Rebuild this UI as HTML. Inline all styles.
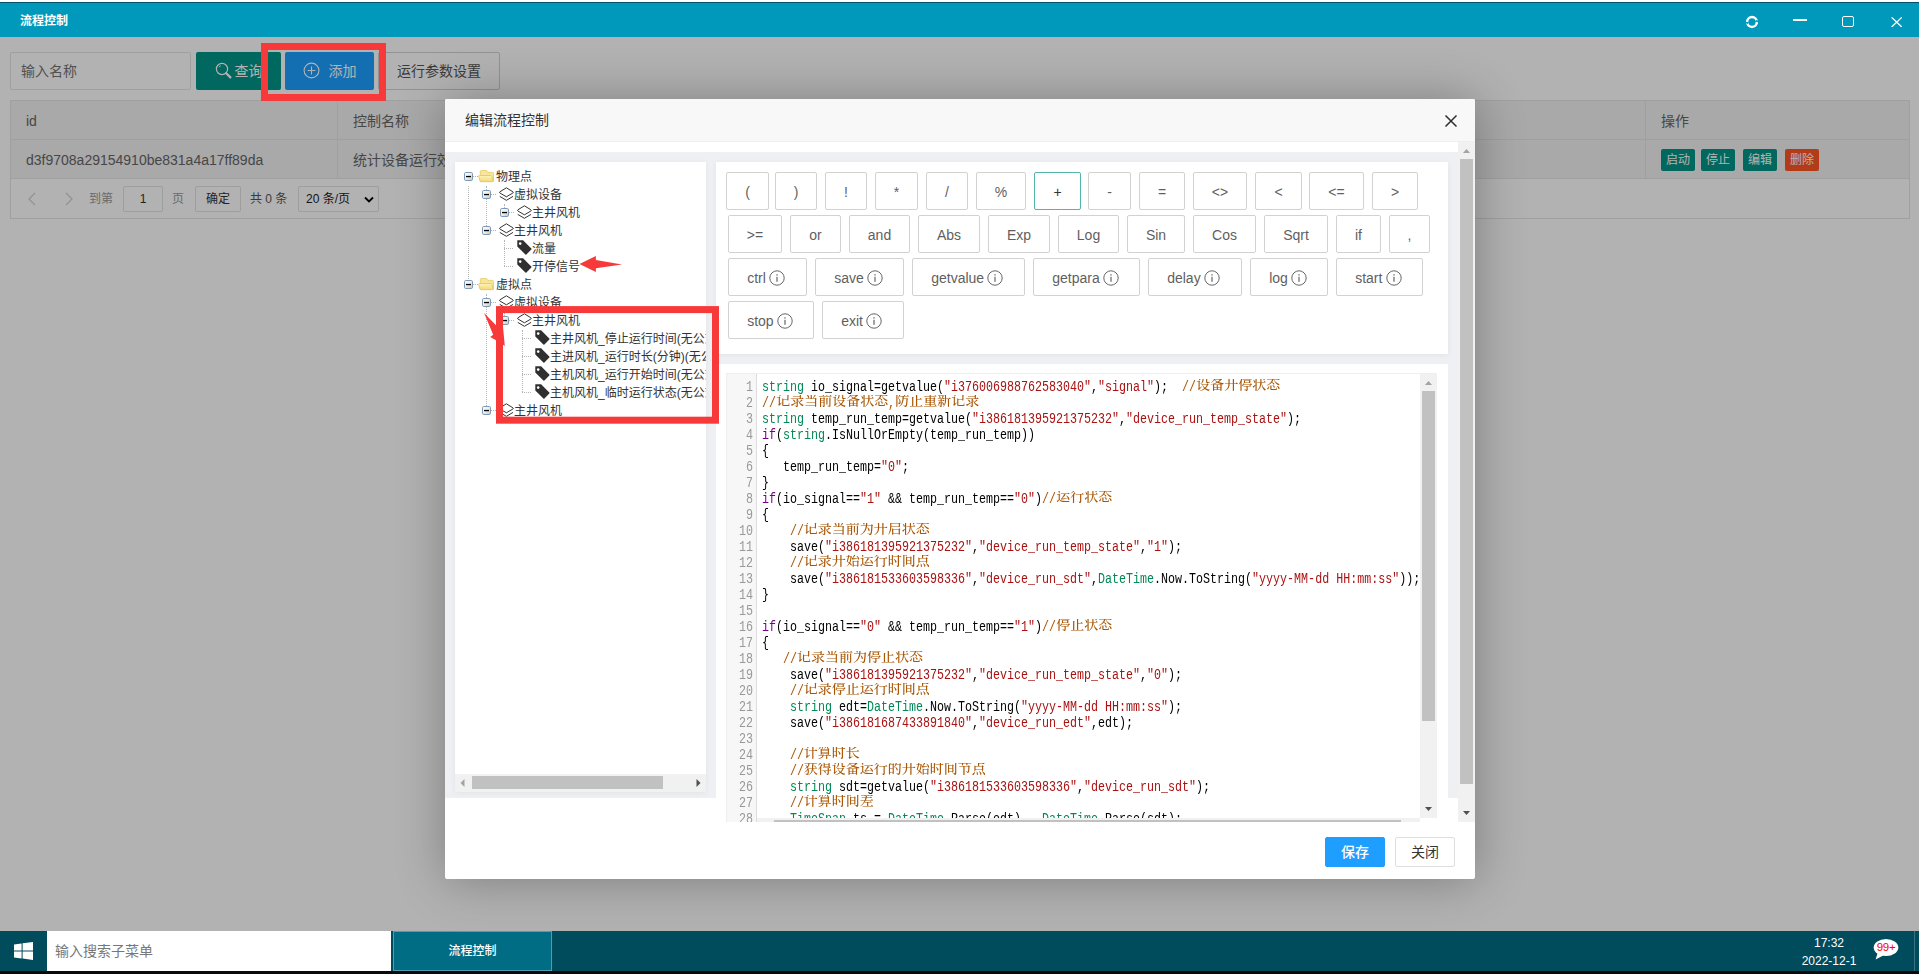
<!DOCTYPE html>
<html lang="zh-CN"><head><meta charset="utf-8"><title>流程控制</title>
<style>
*{box-sizing:border-box;margin:0;padding:0}
html,body{width:1919px;height:974px;overflow:hidden;background:#fff}
body{position:relative;font:14px/1.2 "Liberation Sans","Noto Sans CJK SC",sans-serif;color:#333}
i{font-style:normal}
#topline{position:absolute;left:0;top:0;width:1919px;height:3px;background:#fff;border-bottom:1px solid #00506a}
#titlebar{position:absolute;left:0;top:3px;width:1919px;height:34px;background:#0099bb}
#titlebar .tt{position:absolute;left:20px;top:9.6px;font-size:12px;line-height:16px;font-weight:bold;color:#fff;letter-spacing:0}
.wb{position:absolute}
.wmin{position:absolute;left:1793px;top:15.8px;width:14.2px;height:2.4px;background:#fff}
.wmax{position:absolute;left:1842.3px;top:12.8px;width:11.6px;height:11.4px;border:1.3px solid #fff;border-radius:2px}
#bgpage{position:absolute;left:0;top:37px;width:1919px;height:894px;background:#fff;overflow:hidden}
.inp{position:absolute;left:10px;top:15px;width:181px;height:38px;border:1px solid #e6e6e6;border-radius:2px;line-height:36px;padding-left:10px;color:#757575}
.btn{position:absolute;top:15px;height:38px;line-height:38px;border-radius:2px;color:#fff;white-space:nowrap;text-align:center}
.bq{left:196px;width:85px;background:#009688}
.ba{left:285px;width:89px;background:#1e9fff}
.bp{left:378px;width:122px;background:#fff;border:1px solid #d2d2d2;color:#555;line-height:36px}
#tbl{position:absolute;left:10px;top:63px;width:1900px;height:119px;border:1px solid #e6e6e6}
.th,.td{position:absolute;height:39px;line-height:38px;padding-top:1px;padding-left:15px;background:#f2f2f2;border-right:1px solid #e6e6e6;border-bottom:1px solid #e6e6e6;color:#666;white-space:nowrap;overflow:hidden}
.th{top:0}
.td{top:39px}
.xs{position:absolute;top:9px;width:34px;height:22px;line-height:23.5px;font-size:12px;color:#fff;text-align:center;border-radius:2px}
.xs.g{background:#009688}.xs.r{background:#ff5722}
.pager{position:absolute;left:0;top:78px;width:1898px;height:39px;background:#fff}
.pt{position:absolute;top:12px;font-size:12px;line-height:16px;white-space:nowrap}
.pbox{position:absolute;top:7px;height:26px;line-height:24px;border:1px solid #e2e2e2;border-radius:2px;font-size:12px;text-align:center;color:#333;white-space:nowrap}
#shade{position:absolute;left:0;top:37px;width:1919px;height:894px;background:rgba(0,0,0,.3)}
#red1{position:absolute;left:261px;top:43px;width:125px;height:58px;border:7px solid #f8393a}
#dlg{position:absolute;left:445px;top:99px;width:1030px;height:780px;background:#fff;border-radius:2px;box-shadow:1px 1px 50px rgba(0,0,0,.3)}
.dt{position:absolute;left:0;top:0;width:1030px;height:43px;line-height:42px;padding-left:20px;background:#f8f8f8;border-bottom:1px solid #eee;border-radius:2px 2px 0 0;color:#333;font-size:14px}
.dx{position:absolute;left:999px;top:15px}
#gray{position:absolute;left:0;top:53px;width:1013px;height:646px;background:#eff0f4}
#tree{position:absolute;left:10px;top:63px;width:251px;height:630px;background:#fff;overflow:hidden;box-shadow:0 1px 6px rgba(0,0,0,.06);font-size:12px}
#tree .tx{position:absolute;line-height:18px;height:18px;white-space:nowrap;color:#333;font-size:12px}
.exp,.ic{position:absolute}
.vd{position:absolute;width:0;border-left:1px dotted #b5b5b5}
.hd{position:absolute;height:0;border-top:1px dotted #b5b5b5}
.hsb{position:absolute;left:0;top:612px;width:251px;height:18px;background:#f1f1f1}
.hth{position:absolute;left:17px;top:2px;width:191px;height:13px;background:#c1c1c1}
#bpanel{position:absolute;left:271px;top:63px;width:732px;height:192px;background:#fff;box-shadow:0 1px 6px rgba(0,0,0,.06)}
.kb{position:absolute;height:38px;line-height:39px;border:1px solid #d2d2d2;border-radius:2px;text-align:center;color:#5f5f5f;font-size:14px;white-space:nowrap;background:#fff}
.kb.hov{border-color:#54b5ab;color:#333}
.kb.wi{text-align:left;padding-left:18.2px}
.info{vertical-align:-3px;margin-left:-.8px}
#cpanel{position:absolute;left:271px;top:265px;width:732px;height:458px;background:#fff;overflow:hidden}
#cm{will-change:transform;position:absolute;left:10px;top:9px;width:711px;height:449px;border-top:1px solid #eee;border-left:1px solid #eee;overflow:hidden}
.gut{position:absolute;left:0;top:0;width:30px;height:449px;background:#f7f7f7;border-right:1px solid #ddd}
.ln{position:absolute;left:0;height:16px;width:693px;white-space:nowrap;overflow:hidden}
.ln .no,.ln pre{font-family:"Liberation Mono","Noto Serif CJK SC",monospace;font-size:14px;line-height:16px;height:16px}
.ln .no{position:absolute;left:-34.5px;top:0;width:60px;text-align:right;color:#999;transform:scaleX(.83333);transform-origin:100% 0}
.ln pre{position:absolute;left:34.6px;top:0;color:#000;transform:scaleX(.83333);transform-origin:0 0}
.ln .z{display:inline-block;height:16px;line-height:16px;vertical-align:top;font-family:"Liberation Mono","Noto Serif CJK SC",serif;font-size:14px;font-weight:500;transform:scaleX(1.2);transform-origin:0 0;white-space:nowrap;position:relative;top:-2px}
.k{color:#708}.t{color:#085}.s{color:#a11}.c{color:#a50}
.vsb{position:absolute;left:693px;top:0;width:17px;height:444px;background:#f1f1f1}
.vth{position:absolute;left:2px;top:17px;width:13px;height:330px;background:#c1c1c1}
.chsb{position:absolute;left:30px;top:444px;width:663px;height:5px;background:#f1f1f1}
.chth{position:absolute;left:17px;top:2px;width:627px;height:5px;background:#c1c1c1}
#osb{position:absolute;left:1013px;top:43px;width:17px;height:680px;background:#f1f1f1}
.oth{position:absolute;left:2px;top:17px;width:13px;height:625px;background:#c1c1c1}
.fb{position:absolute;top:738px;width:60px;height:30px;line-height:28px;text-align:center;border-radius:2px;font-size:14px}
.fb.save{left:880px;background:#1e9fff;border:1px solid #1e9fff;color:#fff;font-weight:500}
.fb.close{left:950px;background:#fff;border:1px solid #dedede;color:#333}
#anno{position:absolute;left:0;top:0;pointer-events:none}
#taskbar{position:absolute;left:0;top:931px;width:1919px;height:40px;background:#004b5c}
.start{position:absolute;left:0;top:0;width:47px;height:40px}
.srch{position:absolute;left:47px;top:0;width:344px;height:40px;background:#fff;color:#777;line-height:40px;padding-left:8px;font-size:14px}
.tab{position:absolute;left:393px;top:0;width:159px;height:40px;background:#006d85;border:1px solid #4f9db0;color:#fff;font-size:12px;font-weight:500;line-height:38px;text-align:center}
.clock{position:absolute;left:1779px;top:3px;width:100px;text-align:center;color:#fff;font-size:12px;line-height:18px}
.sd{position:absolute;left:1914px;top:0;width:1px;height:40px;background:#3a7483}
#blk{position:absolute;left:0;top:971px;width:1919px;height:3px;background:#0a0a0a}
</style></head>
<body>
<svg width="0" height="0" style="position:absolute"><defs><linearGradient id="eg" x1="0" y1="0" x2="1" y2="1"><stop offset="0" stop-color="#fff"/><stop offset=".45" stop-color="#f3efe8"/><stop offset="1" stop-color="#cfc5b2"/></linearGradient><linearGradient id="fg" x1="0" y1="0" x2="0" y2="1"><stop offset="0" stop-color="#fdf4b8"/><stop offset="1" stop-color="#f2d877"/></linearGradient></defs></svg>
<div id="topline"></div>
<div id="titlebar"><span class="tt">流程控制</span>
<svg class="wb" style="left:1745.2px;top:11.7px" width="14" height="14" viewBox="0 0 14 14"><circle cx="7" cy="7" r="4.9" fill="none" stroke="#fff" stroke-width="2.5"/><path d="M.2 6.4 L4.4 7.4 L2 9.2Z M13.8 7.6 L9.6 6.6 L12 4.8Z" fill="#0099bb"/><path d="M.6 5 L3.6 7.6 L-.2 8.2Z M13.4 9 L10.4 6.4 L14.2 5.8Z" fill="#fff" opacity=".0"/></svg>
<div class="wmin"></div><div class="wmax"></div>
<svg class="wb" style="left:1890.5px;top:13.8px" width="11.4" height="10.4" viewBox="0 0 11.4 10.4"><path d="M.6 .4 L10.8 10 M10.8 .4 L.6 10" stroke="#fff" stroke-width="1.3"/></svg>
</div>
<div id="bgpage">
<div class="inp"><span>输入名称</span></div>
<div class="btn bq"><svg width="17" height="17" viewBox="0 0 17 17" style="vertical-align:-3px;margin-right:3px"><circle cx="7" cy="7" r="5.6" fill="none" stroke="#fff" stroke-width="1.2"/><path d="M4.2 5.2 Q4.6 4 5.8 3.6" fill="none" stroke="#fff" stroke-width="1"/><path d="M11.2 11.2 L15.4 15.4" stroke="#fff" stroke-width="2.2" stroke-linecap="round"/></svg>查询</div>
<div class="btn ba"><svg width="17" height="17" viewBox="0 0 17 17" style="vertical-align:-3px;margin-right:9px"><circle cx="8.5" cy="8.5" r="7.4" fill="none" stroke="#fff" stroke-width="1.1"/><path d="M8.5 4.6 V12.4 M4.6 8.5 H12.4" stroke="#fff" stroke-width="1.1"/></svg>添加</div>
<div class="btn bp">运行参数设置</div>
<div id="tbl">
 <div class="th" style="left:0;width:327px">id</div>
 <div class="th" style="left:327px;width:1308px">控制名称</div>
 <div class="th" style="left:1635px;width:263px;border-right:0">操作</div>
 <div class="td" style="left:0;width:327px">d3f9708a29154910be831a4a17ff89da</div>
 <div class="td" style="left:327px;width:1308px">统计设备运行效率</div>
 <div class="td" style="left:1635px;width:263px;border-right:0"><span class="xs g" style="left:15px">启动</span><span class="xs g" style="left:55px">停止</span><span class="xs g" style="left:97px">编辑</span><span class="xs r" style="left:139px">删除</span></div>
 <div class="pager">
  <svg style="position:absolute;left:16px;top:13px" width="10" height="14" viewBox="0 0 10 14"><path d="M8 1 L2 7 L8 13" fill="none" stroke="#d2d2d2" stroke-width="1.3"/></svg>
  <svg style="position:absolute;left:53px;top:13px" width="10" height="14" viewBox="0 0 10 14"><path d="M2 1 L8 7 L2 13" fill="none" stroke="#d2d2d2" stroke-width="1.3"/></svg>
  <span class="pt" style="left:78px;color:#999">到第</span>
  <span class="pbox" style="left:112px;width:40px">1</span>
  <span class="pt" style="left:161px;color:#999">页</span>
  <span class="pbox" style="left:184px;width:46px;color:#333">确定</span>
  <span class="pt" style="left:239px;color:#555">共 0 条</span>
  <span class="pbox" style="left:287px;width:81px;text-align:left;padding-left:7px;color:#222">20 条/页<svg style="position:absolute;right:4px;top:9px" width="10" height="8" viewBox="0 0 10 8"><path d="M1 1.5 L5 5.5 L9 1.5" fill="none" stroke="#000" stroke-width="1.8"/></svg></span>
 </div>
</div>
</div>
<div id="shade"></div>
<div id="red1"></div>
<div id="dlg">
<div class="dt">编辑流程控制<svg class="dx" width="14" height="14" viewBox="0 0 14 14"><path d="M1.5 1.5 L12.5 12.5 M12.5 1.5 L1.5 12.5" stroke="#2d2d2d" stroke-width="1.5"/></svg></div>
<div id="gray"></div>
<div id="tree">
<i class="vd" style="left:13px;top:24px;height:93px"></i><i class="vd" style="left:31px;top:24px;height:44px"></i><i class="vd" style="left:49px;top:42px;height:8px"></i><i class="vd" style="left:49px;top:78px;height:26px"></i><i class="vd" style="left:31px;top:132px;height:116px"></i><i class="vd" style="left:49px;top:150px;height:8px"></i><i class="vd" style="left:67px;top:168px;height:62px"></i><i class="hd" style="left:18px;top:14px;width:5px"></i><i class="hd" style="left:18px;top:122px;width:5px"></i><i class="hd" style="left:36px;top:32px;width:5px"></i><i class="hd" style="left:36px;top:68px;width:5px"></i><i class="hd" style="left:36px;top:140px;width:5px"></i><i class="hd" style="left:36px;top:248px;width:5px"></i><i class="hd" style="left:54px;top:50px;width:5px"></i><i class="hd" style="left:54px;top:158px;width:5px"></i><svg class="exp" style="left:9px;top:10px" width="9" height="9" viewBox="0 0 9 9"><rect x=".5" y=".5" width="8" height="8" rx="1.3" fill="url(#eg)" stroke="#7c9bbb"/><rect x="2" y="3.9" width="5" height="1.3" fill="#000"/></svg><svg class="ic" style="left:23px;top:6px" width="16" height="16" viewBox="0 0 16 16"><path d="M2.3 13 V3.4 Q2.3 2.5 3.2 2.5 H8 Q8.8 2.5 9.2 3.2 L9.8 4.4 H14.6 Q15.5 4.4 15.5 5.3 V13Z" fill="#f6e59a" stroke="#e4c964" stroke-width=".8"/><path d="M.7 8.3 Q.5 7.5 1.4 7.5 H12.6 Q13.4 7.5 13.7 8.3 L15.3 13 Q15.5 13.7 14.6 13.7 H3 Q2.2 13.7 2 13Z" fill="url(#fg)" stroke="#e2c45a" stroke-width=".8"/></svg><span class="tx" style="left:41px;top:6px">物理点</span>
<svg class="exp" style="left:27px;top:28px" width="9" height="9" viewBox="0 0 9 9"><rect x=".5" y=".5" width="8" height="8" rx="1.3" fill="url(#eg)" stroke="#7c9bbb"/><rect x="2" y="3.9" width="5" height="1.3" fill="#000"/></svg><svg class="ic" style="left:44px;top:24px" width="15" height="16" viewBox="0 0 15 16"><path d="M7.4 1.8 L13.9 5.8 Q14.7 6.4 13.9 7 L7.4 10.8 L.9 7 Q.1 6.4 .9 5.8Z" fill="none" stroke="#333" stroke-width="1" stroke-linejoin="round"/><path d="M1.1 10.6 L7.4 14.3 L13.7 10.6" fill="none" stroke="#333" stroke-width="1" stroke-linecap="round" stroke-linejoin="round"/></svg><span class="tx" style="left:59px;top:24px">虚拟设备</span>
<svg class="exp" style="left:45px;top:46px" width="9" height="9" viewBox="0 0 9 9"><rect x=".5" y=".5" width="8" height="8" rx="1.3" fill="url(#eg)" stroke="#7c9bbb"/><rect x="2" y="3.9" width="5" height="1.3" fill="#000"/></svg><svg class="ic" style="left:62px;top:42px" width="15" height="16" viewBox="0 0 15 16"><path d="M7.4 1.8 L13.9 5.8 Q14.7 6.4 13.9 7 L7.4 10.8 L.9 7 Q.1 6.4 .9 5.8Z" fill="none" stroke="#333" stroke-width="1" stroke-linejoin="round"/><path d="M1.1 10.6 L7.4 14.3 L13.7 10.6" fill="none" stroke="#333" stroke-width="1" stroke-linecap="round" stroke-linejoin="round"/></svg><span class="tx" style="left:77px;top:42px">主井风机</span>
<svg class="exp" style="left:27px;top:64px" width="9" height="9" viewBox="0 0 9 9"><rect x=".5" y=".5" width="8" height="8" rx="1.3" fill="url(#eg)" stroke="#7c9bbb"/><rect x="2" y="3.9" width="5" height="1.3" fill="#000"/></svg><svg class="ic" style="left:44px;top:60px" width="15" height="16" viewBox="0 0 15 16"><path d="M7.4 1.8 L13.9 5.8 Q14.7 6.4 13.9 7 L7.4 10.8 L.9 7 Q.1 6.4 .9 5.8Z" fill="none" stroke="#333" stroke-width="1" stroke-linejoin="round"/><path d="M1.1 10.6 L7.4 14.3 L13.7 10.6" fill="none" stroke="#333" stroke-width="1" stroke-linecap="round" stroke-linejoin="round"/></svg><span class="tx" style="left:59px;top:60px">主井风机</span>
<i class="hd" style="left:49px;top:86px;width:9px"></i><svg class="ic" style="left:61.5px;top:78px" width="15" height="16" viewBox="0 0 15 16"><path d="M.3 .3 H6.1 L14.3 8.5 Q14.8 9 14.3 9.5 L9.4 14.4 Q8.9 14.9 8.4 14.4 L.3 6.5Z" fill="#2f2f2f"/><circle cx="3.2" cy="3.6" r="1.3" fill="#fff"/></svg><span class="tx" style="left:77px;top:78px">流量</span>
<i class="hd" style="left:49px;top:104px;width:9px"></i><svg class="ic" style="left:61.5px;top:96px" width="15" height="16" viewBox="0 0 15 16"><path d="M.3 .3 H6.1 L14.3 8.5 Q14.8 9 14.3 9.5 L9.4 14.4 Q8.9 14.9 8.4 14.4 L.3 6.5Z" fill="#2f2f2f"/><circle cx="3.2" cy="3.6" r="1.3" fill="#fff"/></svg><span class="tx" style="left:77px;top:96px">开停信号</span>
<svg class="exp" style="left:9px;top:118px" width="9" height="9" viewBox="0 0 9 9"><rect x=".5" y=".5" width="8" height="8" rx="1.3" fill="url(#eg)" stroke="#7c9bbb"/><rect x="2" y="3.9" width="5" height="1.3" fill="#000"/></svg><svg class="ic" style="left:23px;top:114px" width="16" height="16" viewBox="0 0 16 16"><path d="M2.3 13 V3.4 Q2.3 2.5 3.2 2.5 H8 Q8.8 2.5 9.2 3.2 L9.8 4.4 H14.6 Q15.5 4.4 15.5 5.3 V13Z" fill="#f6e59a" stroke="#e4c964" stroke-width=".8"/><path d="M.7 8.3 Q.5 7.5 1.4 7.5 H12.6 Q13.4 7.5 13.7 8.3 L15.3 13 Q15.5 13.7 14.6 13.7 H3 Q2.2 13.7 2 13Z" fill="url(#fg)" stroke="#e2c45a" stroke-width=".8"/></svg><span class="tx" style="left:41px;top:114px">虚拟点</span>
<svg class="exp" style="left:27px;top:136px" width="9" height="9" viewBox="0 0 9 9"><rect x=".5" y=".5" width="8" height="8" rx="1.3" fill="url(#eg)" stroke="#7c9bbb"/><rect x="2" y="3.9" width="5" height="1.3" fill="#000"/></svg><svg class="ic" style="left:44px;top:132px" width="15" height="16" viewBox="0 0 15 16"><path d="M7.4 1.8 L13.9 5.8 Q14.7 6.4 13.9 7 L7.4 10.8 L.9 7 Q.1 6.4 .9 5.8Z" fill="none" stroke="#333" stroke-width="1" stroke-linejoin="round"/><path d="M1.1 10.6 L7.4 14.3 L13.7 10.6" fill="none" stroke="#333" stroke-width="1" stroke-linecap="round" stroke-linejoin="round"/></svg><span class="tx" style="left:59px;top:132px">虚拟设备</span>
<svg class="exp" style="left:45px;top:154px" width="9" height="9" viewBox="0 0 9 9"><rect x=".5" y=".5" width="8" height="8" rx="1.3" fill="url(#eg)" stroke="#7c9bbb"/><rect x="2" y="3.9" width="5" height="1.3" fill="#000"/></svg><svg class="ic" style="left:62px;top:150px" width="15" height="16" viewBox="0 0 15 16"><path d="M7.4 1.8 L13.9 5.8 Q14.7 6.4 13.9 7 L7.4 10.8 L.9 7 Q.1 6.4 .9 5.8Z" fill="none" stroke="#333" stroke-width="1" stroke-linejoin="round"/><path d="M1.1 10.6 L7.4 14.3 L13.7 10.6" fill="none" stroke="#333" stroke-width="1" stroke-linecap="round" stroke-linejoin="round"/></svg><span class="tx" style="left:77px;top:150px">主井风机</span>
<i class="hd" style="left:67px;top:176px;width:9px"></i><svg class="ic" style="left:79.5px;top:168px" width="15" height="16" viewBox="0 0 15 16"><path d="M.3 .3 H6.1 L14.3 8.5 Q14.8 9 14.3 9.5 L9.4 14.4 Q8.9 14.9 8.4 14.4 L.3 6.5Z" fill="#2f2f2f"/><circle cx="3.2" cy="3.6" r="1.3" fill="#fff"/></svg><span class="tx" style="left:95px;top:168px">主井风机_停止运行时间(无公式)</span>
<i class="hd" style="left:67px;top:194px;width:9px"></i><svg class="ic" style="left:79.5px;top:186px" width="15" height="16" viewBox="0 0 15 16"><path d="M.3 .3 H6.1 L14.3 8.5 Q14.8 9 14.3 9.5 L9.4 14.4 Q8.9 14.9 8.4 14.4 L.3 6.5Z" fill="#2f2f2f"/><circle cx="3.2" cy="3.6" r="1.3" fill="#fff"/></svg><span class="tx" style="left:95px;top:186px">主进风机_运行时长(分钟)(无公式)</span>
<i class="hd" style="left:67px;top:212px;width:9px"></i><svg class="ic" style="left:79.5px;top:204px" width="15" height="16" viewBox="0 0 15 16"><path d="M.3 .3 H6.1 L14.3 8.5 Q14.8 9 14.3 9.5 L9.4 14.4 Q8.9 14.9 8.4 14.4 L.3 6.5Z" fill="#2f2f2f"/><circle cx="3.2" cy="3.6" r="1.3" fill="#fff"/></svg><span class="tx" style="left:95px;top:204px">主机风机_运行开始时间(无公式)</span>
<i class="hd" style="left:67px;top:230px;width:9px"></i><svg class="ic" style="left:79.5px;top:222px" width="15" height="16" viewBox="0 0 15 16"><path d="M.3 .3 H6.1 L14.3 8.5 Q14.8 9 14.3 9.5 L9.4 14.4 Q8.9 14.9 8.4 14.4 L.3 6.5Z" fill="#2f2f2f"/><circle cx="3.2" cy="3.6" r="1.3" fill="#fff"/></svg><span class="tx" style="left:95px;top:222px">主机风机_临时运行状态(无公式)</span>
<svg class="exp" style="left:27px;top:244px" width="9" height="9" viewBox="0 0 9 9"><rect x=".5" y=".5" width="8" height="8" rx="1.3" fill="url(#eg)" stroke="#7c9bbb"/><rect x="2" y="3.9" width="5" height="1.3" fill="#000"/></svg><svg class="ic" style="left:44px;top:240px" width="15" height="16" viewBox="0 0 15 16"><path d="M7.4 1.8 L13.9 5.8 Q14.7 6.4 13.9 7 L7.4 10.8 L.9 7 Q.1 6.4 .9 5.8Z" fill="none" stroke="#333" stroke-width="1" stroke-linejoin="round"/><path d="M1.1 10.6 L7.4 14.3 L13.7 10.6" fill="none" stroke="#333" stroke-width="1" stroke-linecap="round" stroke-linejoin="round"/></svg><span class="tx" style="left:59px;top:240px">主井风机</span>

<div class="hsb"><svg style="position:absolute;left:5px;top:5px" width="5" height="8" viewBox="0 0 5 8"><path d="M4.5 0 V8 L.5 4Z" fill="#a3a3a3"/></svg><div class="hth"></div><svg style="position:absolute;right:5px;top:5px" width="5" height="8" viewBox="0 0 5 8"><path d="M.5 0 V8 L4.5 4Z" fill="#505050"/></svg></div>
</div>
<div id="bpanel">
<span class="kb" style="left:10px;top:10px;width:43px">(</span><span class="kb" style="left:59px;top:10px;width:42px">)</span><span class="kb" style="left:109px;top:10px;width:42px">!</span><span class="kb" style="left:159px;top:10px;width:43px">*</span><span class="kb" style="left:210px;top:10px;width:42px">/</span><span class="kb" style="left:260px;top:10px;width:50px">%</span><span class="kb hov" style="left:318px;top:10px;width:47px">+</span><span class="kb" style="left:372px;top:10px;width:43px">-</span><span class="kb" style="left:423px;top:10px;width:46px">=</span><span class="kb" style="left:477px;top:10px;width:54px">&lt;&gt;</span><span class="kb" style="left:539px;top:10px;width:47px">&lt;</span><span class="kb" style="left:593px;top:10px;width:55px">&lt;=</span><span class="kb" style="left:656px;top:10px;width:46px">&gt;</span>
<span class="kb" style="left:12px;top:53px;width:54px">&gt;=</span><span class="kb" style="left:74px;top:53px;width:51px">or</span><span class="kb" style="left:133px;top:53px;width:61px">and</span><span class="kb" style="left:202px;top:53px;width:62px">Abs</span><span class="kb" style="left:272px;top:53px;width:62px">Exp</span><span class="kb" style="left:342px;top:53px;width:61px">Log</span><span class="kb" style="left:411px;top:53px;width:58px">Sin</span><span class="kb" style="left:477px;top:53px;width:63px">Cos</span><span class="kb" style="left:548px;top:53px;width:64px">Sqrt</span><span class="kb" style="left:620px;top:53px;width:45px">if</span><span class="kb" style="left:673px;top:53px;width:41px">,</span>
<span class="kb wi" style="left:12px;top:96px;width:79px">ctrl <svg class="info" width="16" height="16" viewBox="0 0 16 16"><circle cx="8" cy="8" r="7.2" fill="none" stroke="#666" stroke-width="1"/><rect x="7.4" y="6.8" width="1.2" height="5" fill="#666"/><rect x="7.4" y="4.2" width="1.2" height="1.4" fill="#666"/></svg></span><span class="kb wi" style="left:99px;top:96px;width:89px">save <svg class="info" width="16" height="16" viewBox="0 0 16 16"><circle cx="8" cy="8" r="7.2" fill="none" stroke="#666" stroke-width="1"/><rect x="7.4" y="6.8" width="1.2" height="5" fill="#666"/><rect x="7.4" y="4.2" width="1.2" height="1.4" fill="#666"/></svg></span><span class="kb wi" style="left:196px;top:96px;width:113px">getvalue <svg class="info" width="16" height="16" viewBox="0 0 16 16"><circle cx="8" cy="8" r="7.2" fill="none" stroke="#666" stroke-width="1"/><rect x="7.4" y="6.8" width="1.2" height="5" fill="#666"/><rect x="7.4" y="4.2" width="1.2" height="1.4" fill="#666"/></svg></span><span class="kb wi" style="left:317px;top:96px;width:107px">getpara <svg class="info" width="16" height="16" viewBox="0 0 16 16"><circle cx="8" cy="8" r="7.2" fill="none" stroke="#666" stroke-width="1"/><rect x="7.4" y="6.8" width="1.2" height="5" fill="#666"/><rect x="7.4" y="4.2" width="1.2" height="1.4" fill="#666"/></svg></span><span class="kb wi" style="left:432px;top:96px;width:94px">delay <svg class="info" width="16" height="16" viewBox="0 0 16 16"><circle cx="8" cy="8" r="7.2" fill="none" stroke="#666" stroke-width="1"/><rect x="7.4" y="6.8" width="1.2" height="5" fill="#666"/><rect x="7.4" y="4.2" width="1.2" height="1.4" fill="#666"/></svg></span><span class="kb wi" style="left:534px;top:96px;width:78px">log <svg class="info" width="16" height="16" viewBox="0 0 16 16"><circle cx="8" cy="8" r="7.2" fill="none" stroke="#666" stroke-width="1"/><rect x="7.4" y="6.8" width="1.2" height="5" fill="#666"/><rect x="7.4" y="4.2" width="1.2" height="1.4" fill="#666"/></svg></span><span class="kb wi" style="left:620px;top:96px;width:87px">start <svg class="info" width="16" height="16" viewBox="0 0 16 16"><circle cx="8" cy="8" r="7.2" fill="none" stroke="#666" stroke-width="1"/><rect x="7.4" y="6.8" width="1.2" height="5" fill="#666"/><rect x="7.4" y="4.2" width="1.2" height="1.4" fill="#666"/></svg></span>
<span class="kb wi" style="left:12px;top:139px;width:86px">stop <svg class="info" width="16" height="16" viewBox="0 0 16 16"><circle cx="8" cy="8" r="7.2" fill="none" stroke="#666" stroke-width="1"/><rect x="7.4" y="6.8" width="1.2" height="5" fill="#666"/><rect x="7.4" y="4.2" width="1.2" height="1.4" fill="#666"/></svg></span><span class="kb wi" style="left:106px;top:139px;width:82px">exit <svg class="info" width="16" height="16" viewBox="0 0 16 16"><circle cx="8" cy="8" r="7.2" fill="none" stroke="#666" stroke-width="1"/><rect x="7.4" y="6.8" width="1.2" height="5" fill="#666"/><rect x="7.4" y="4.2" width="1.2" height="1.4" fill="#666"/></svg></span>
</div>
<div id="cpanel"><div id="cm">
<div class="gut"></div>
<div class="ln" style="top:5px"><span class="no">1</span><pre><span class="t">string</span> io_signal=getvalue(<span class="s">"i376006988762583040"</span>,<span class="s">"signal"</span>);  <span class="c">//<span class="z" style="width:100.8px">设备开停状态</span></span></pre></div>
<div class="ln" style="top:21px"><span class="no">2</span><pre><span class="c">//<span class="z" style="width:134.4px">记录当前设备状态</span>,<span class="z" style="width:100.8px">防止重新记录</span></span></pre></div>
<div class="ln" style="top:37px"><span class="no">3</span><pre><span class="t">string</span> temp_run_temp=getvalue(<span class="s">"i386181395921375232"</span>,<span class="s">"device_run_temp_state"</span>);</pre></div>
<div class="ln" style="top:53px"><span class="no">4</span><pre><span class="k">if</span>(<span class="t">string</span>.IsNullOrEmpty(temp_run_temp))</pre></div>
<div class="ln" style="top:69px"><span class="no">5</span><pre>{</pre></div>
<div class="ln" style="top:85px"><span class="no">6</span><pre>   temp_run_temp=<span class="s">"0"</span>;</pre></div>
<div class="ln" style="top:101px"><span class="no">7</span><pre>}</pre></div>
<div class="ln" style="top:117px"><span class="no">8</span><pre><span class="k">if</span>(io_signal==<span class="s">"1"</span> &amp;&amp; temp_run_temp==<span class="s">"0"</span>)<span class="c">//<span class="z" style="width:67.2px">运行状态</span></span></pre></div>
<div class="ln" style="top:133px"><span class="no">9</span><pre>{</pre></div>
<div class="ln" style="top:149px"><span class="no">10</span><pre>    <span class="c">//<span class="z" style="width:151.2px">记录当前为开启状态</span></span></pre></div>
<div class="ln" style="top:165px"><span class="no">11</span><pre>    save(<span class="s">"i386181395921375232"</span>,<span class="s">"device_run_temp_state"</span>,<span class="s">"1"</span>);</pre></div>
<div class="ln" style="top:181px"><span class="no">12</span><pre>    <span class="c">//<span class="z" style="width:151.2px">记录开始运行时间点</span></span></pre></div>
<div class="ln" style="top:197px"><span class="no">13</span><pre>    save(<span class="s">"i386181533603598336"</span>,<span class="s">"device_run_sdt"</span>,<span class="t">DateTime</span>.Now.ToString(<span class="s">"yyyy-MM-dd HH:mm:ss"</span>));</pre></div>
<div class="ln" style="top:213px"><span class="no">14</span><pre>}</pre></div>
<div class="ln" style="top:229px"><span class="no">15</span><pre></pre></div>
<div class="ln" style="top:245px"><span class="no">16</span><pre><span class="k">if</span>(io_signal==<span class="s">"0"</span> &amp;&amp; temp_run_temp==<span class="s">"1"</span>)<span class="c">//<span class="z" style="width:67.2px">停止状态</span></span></pre></div>
<div class="ln" style="top:261px"><span class="no">17</span><pre>{</pre></div>
<div class="ln" style="top:277px"><span class="no">18</span><pre>   <span class="c">//<span class="z" style="width:151.2px">记录当前为停止状态</span></span></pre></div>
<div class="ln" style="top:293px"><span class="no">19</span><pre>    save(<span class="s">"i386181395921375232"</span>,<span class="s">"device_run_temp_state"</span>,<span class="s">"0"</span>);</pre></div>
<div class="ln" style="top:309px"><span class="no">20</span><pre>    <span class="c">//<span class="z" style="width:151.2px">记录停止运行时间点</span></span></pre></div>
<div class="ln" style="top:325px"><span class="no">21</span><pre>    <span class="t">string</span> edt=<span class="t">DateTime</span>.Now.ToString(<span class="s">"yyyy-MM-dd HH:mm:ss"</span>);</pre></div>
<div class="ln" style="top:341px"><span class="no">22</span><pre>    save(<span class="s">"i386181687433891840"</span>,<span class="s">"device_run_edt"</span>,edt);</pre></div>
<div class="ln" style="top:357px"><span class="no">23</span><pre></pre></div>
<div class="ln" style="top:373px"><span class="no">24</span><pre>    <span class="c">//<span class="z" style="width:67.2px">计算时长</span></span></pre></div>
<div class="ln" style="top:389px"><span class="no">25</span><pre>    <span class="c">//<span class="z" style="width:218.4px">获得设备运行的开始时间节点</span></span></pre></div>
<div class="ln" style="top:405px"><span class="no">26</span><pre>    <span class="t">string</span> sdt=getvalue(<span class="s">"i386181533603598336"</span>,<span class="s">"device_run_sdt"</span>);</pre></div>
<div class="ln" style="top:421px"><span class="no">27</span><pre>    <span class="c">//<span class="z" style="width:84.0px">计算时间差</span></span></pre></div>
<div class="ln" style="top:437px"><span class="no">28</span><pre>    <span class="t">TimeSpan</span> ts = <span class="t">DateTime</span>.Parse(edt) - <span class="t">DateTime</span>.Parse(sdt);</pre></div>
<div class="vsb"><svg style="position:absolute;left:5px;top:7px" width="7" height="4" viewBox="0 0 7 4"><path d="M0 4 H7 L3.5 0Z" fill="#a3a3a3"/></svg><div class="vth"></div><svg style="position:absolute;left:5px;top:433px" width="7" height="4" viewBox="0 0 7 4"><path d="M0 0 H7 L3.5 4Z" fill="#505050"/></svg></div>
<div class="chsb"><div class="chth"></div></div>
</div></div>
<div id="osb"><svg style="position:absolute;left:5px;top:7px" width="7" height="4" viewBox="0 0 7 4"><path d="M0 4 H7 L3.5 0Z" fill="#a3a3a3"/></svg><div class="oth"></div><svg style="position:absolute;left:5px;top:669px" width="7" height="4" viewBox="0 0 7 4"><path d="M0 0 H7 L3.5 4Z" fill="#505050"/></svg></div>
<div id="foot"><span class="fb save">保存</span><span class="fb close">关闭</span></div>
</div>
<svg id="anno" width="1919" height="974" viewBox="0 0 1919 974">
<path d="M579.5 263.9 L595.9 255.9 L595.9 259.9 L622 264.5 L595.9 268.2 L595.9 272Z" fill="#f8393a"/>
<rect x="499.5" y="309.6" width="216" height="110.6" fill="none" stroke="#f8393a" stroke-width="7"/>
<path d="M484.1 313.1 L496.5 325.8 L503 327 L504.8 345.9 L496 340.3 L490.2 336.9 L493.2 334.8Z" fill="#f8393a"/>
</svg>
<div id="taskbar">
<div class="start"><svg width="19" height="18" viewBox="0 0 19 18" style="position:absolute;left:14px;top:11px"><path d="M0 2.6 L7.6 1.4 V8.4 H0Z M8.6 1.2 L19 0 V8.4 H8.6Z M0 9.4 H7.6 V16.4 L0 15.4Z M8.6 9.4 H19 V18 L8.6 16.6Z" fill="#fff"/></svg></div>
<div class="srch">输入搜索子菜单</div>
<div class="tab">流程控制</div>
<div class="clock"><div>17:32</div><div>2022-12-1</div></div>
<svg style="position:absolute;left:1872px;top:7px" width="28" height="24" viewBox="0 0 28 24"><ellipse cx="14" cy="9.5" rx="12.3" ry="8.6" fill="#fff"/><path d="M6 14 L3.6 21.4 L13 16.5Z" fill="#fff"/><text x="14" y="13.4" font-family="Liberation Sans, sans-serif" font-size="11.5" fill="#f00" text-anchor="middle" letter-spacing="-0.3">99+</text></svg>
<div class="sd"></div>
</div>
<div id="blk"></div>
</body></html>
